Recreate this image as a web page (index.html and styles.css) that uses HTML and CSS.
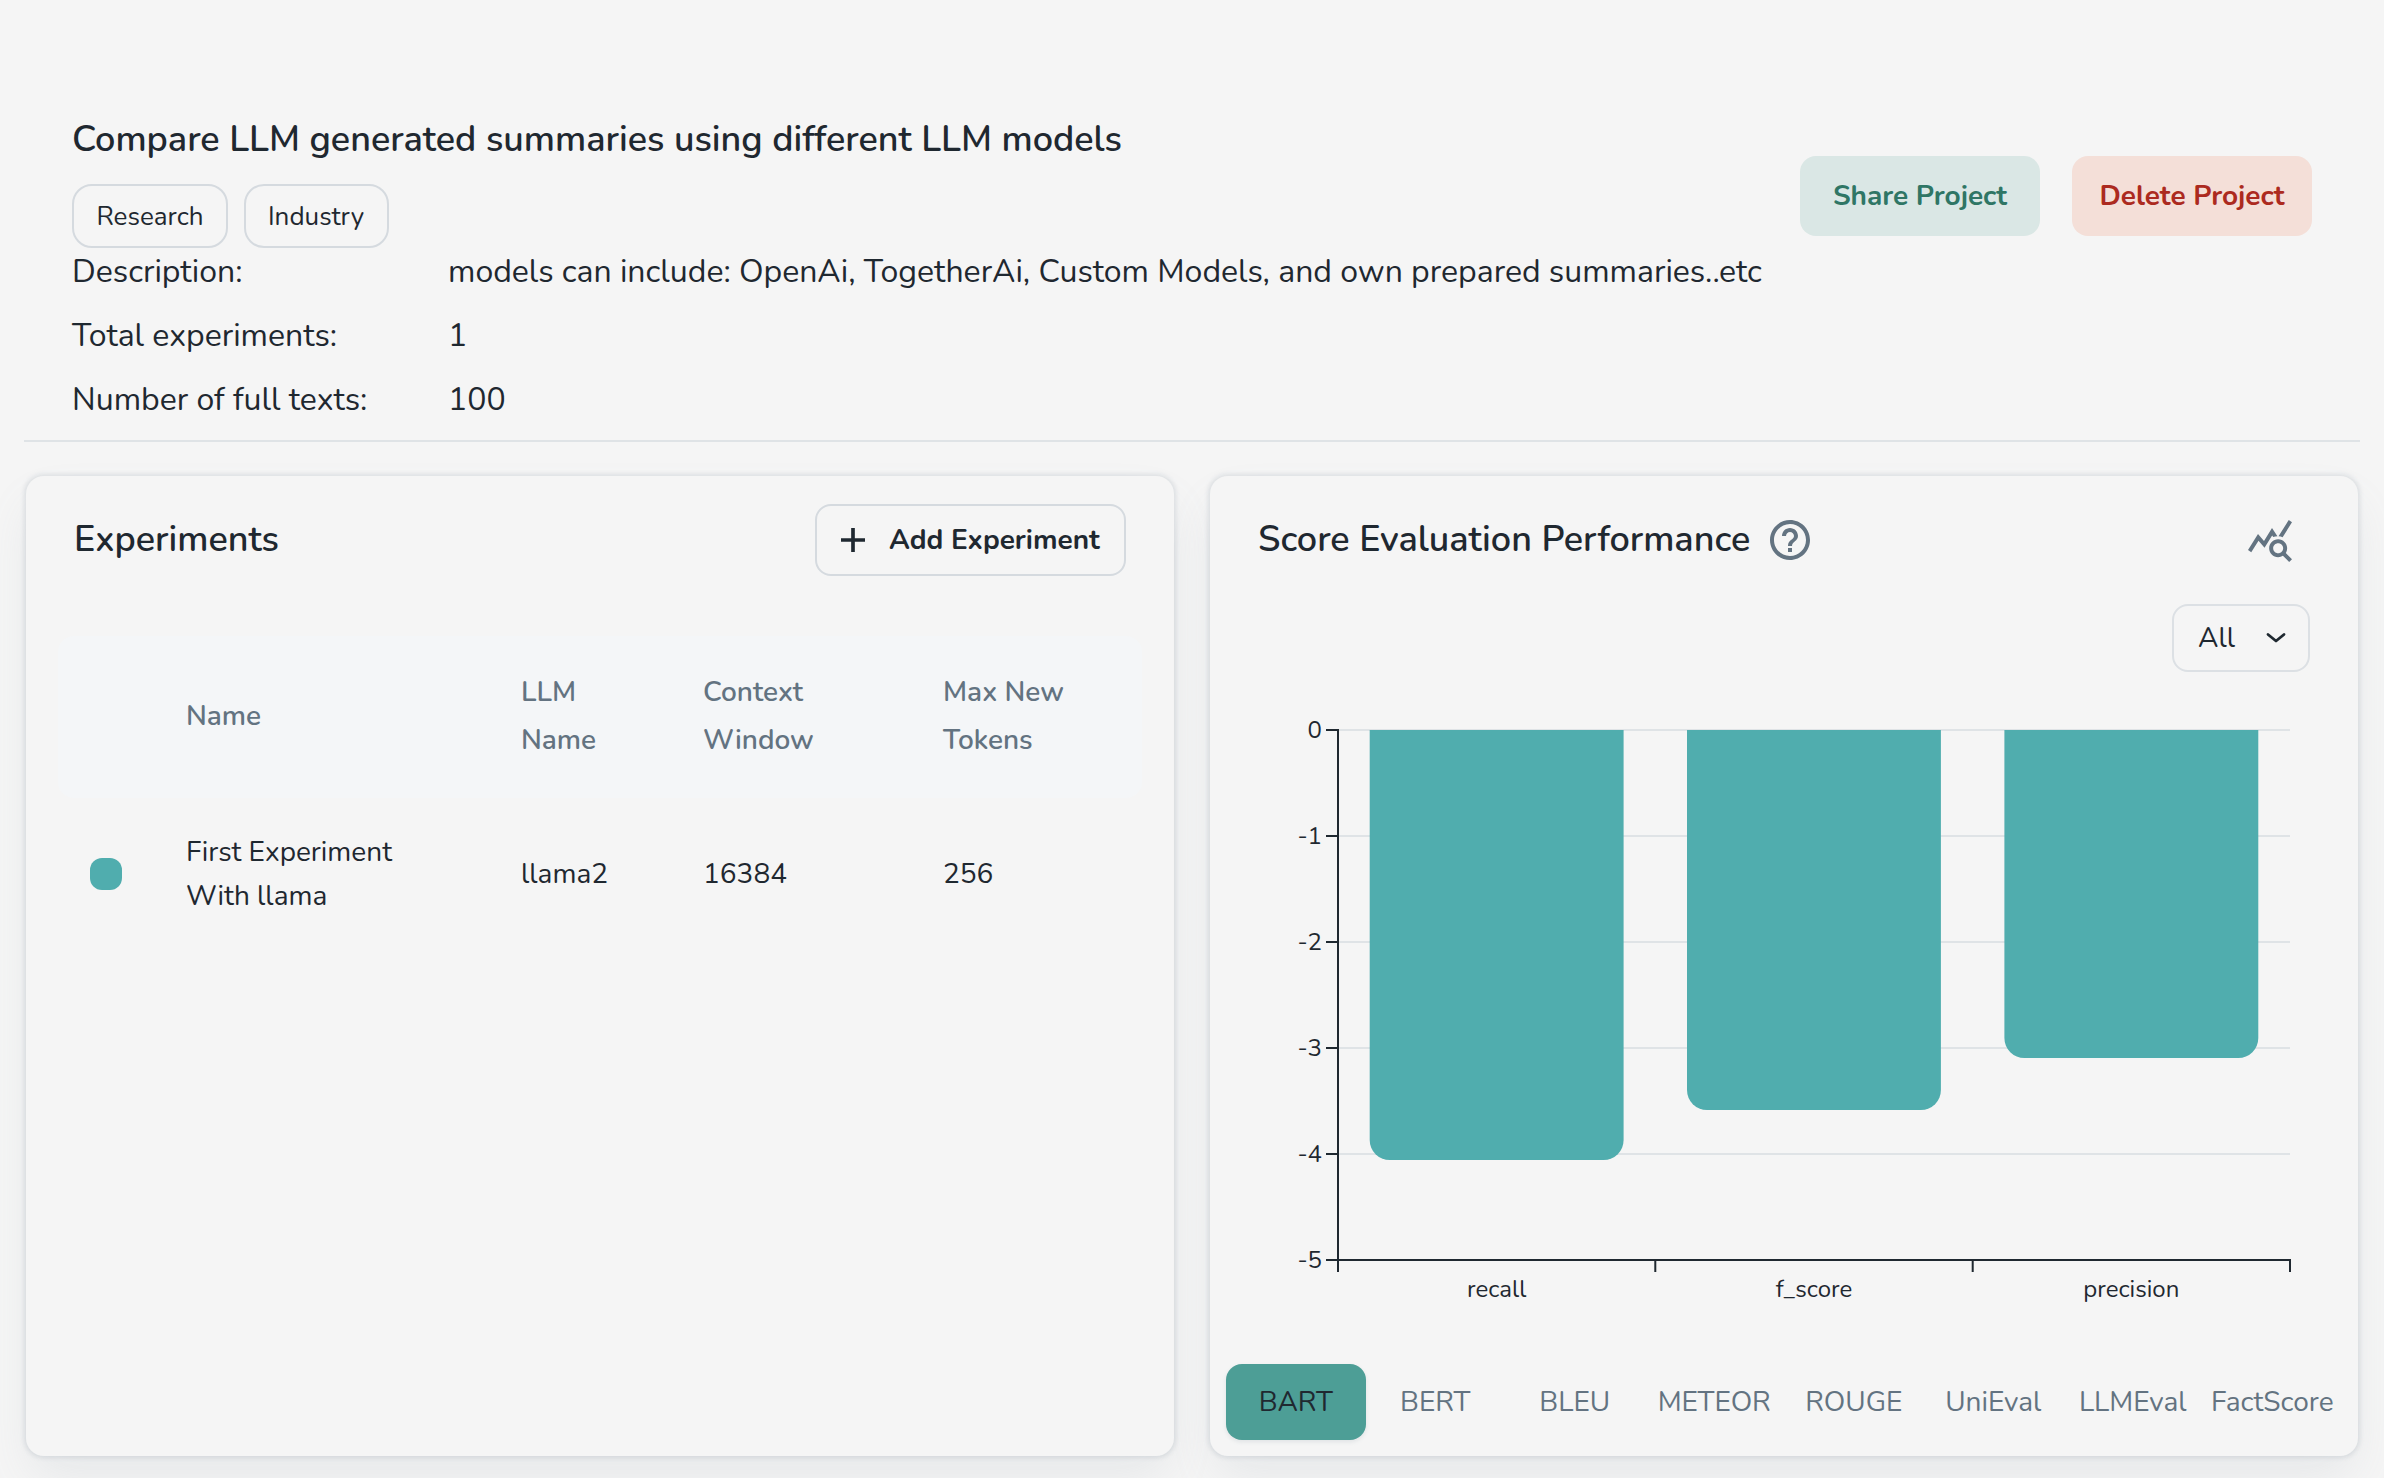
FILE: index.html
```html
<!DOCTYPE html>
<html lang="en">
<head>
<meta charset="utf-8">
<title>Compare LLM generated summaries</title>
<link rel="stylesheet" href="styles.css">
</head>
<body>
<header class="project">
  <div class="project-info">
    <h1>Compare LLM generated summaries using different LLM models</h1>
    <div class="tags"><span class="tag">Research</span><span class="tag industry">Industry</span></div>
    <dl class="facts">
      <dt>Description:</dt><dd>models can include: OpenAi, TogetherAi, Custom Models, and own prepared summaries..etc</dd>
      <dt>Total experiments:</dt><dd>1</dd>
      <dt>Number of full texts:</dt><dd>100</dd>
    </dl>
  </div>
  <div class="project-actions">
    <button class="btn share">Share Project</button>
    <button class="btn delete">Delete Project</button>
  </div>
</header>
<main class="panels">
  <section class="card">
    <div class="card-head">
      <h2>Experiments</h2>
      <button class="btn add">
        <svg width="40" height="40" viewBox="0 0 24 24"><path fill="currentColor" d="M19.200 13.100h-6.100v6.100h-2.200v-6.100H4.800v-2.200h6.100V4.800h2.200v6.100h6.100z"/></svg>
        <span>Add Experiment</span>
      </button>
    </div>
    <div class="table">
      <div class="row row-head">
        <span></span><span>Name</span><span>LLM<br>Name</span><span>Context<br>Window</span><span>Max New<br>Tokens</span>
      </div>
      <div class="row row-body">
        <i class="swatch"></i><span>First Experiment<br>With llama</span><span>llama2</span><span>16384</span><span>256</span>
      </div>
    </div>
  </section>
  <section class="card">
    <div class="card-head chart-head">
      <h2 class="with-help">Score Evaluation Performance</h2>
      <svg class="icon" width="48" height="48" viewBox="0 0 24 24"><path d="M11 18h2v-2h-2zm1-16C6.480 2 2 6.480 2 12s4.480 10 10 10 10-4.480 10-10S17.520 2 12 2m0 18c-4.410 0-8-3.590-8-8s3.590-8 8-8 8 3.590 8 8-3.590 8-8 8m0-14c-2.210 0-4 1.790-4 4h2c0-1.100.9-2 2-2s2 .9 2 2c0 2-3 1.750-3 5h2c0-2.250 3-2.500 3-5 0-2.210-1.790-4-4-4"/></svg>
      <svg class="icon query" width="48" height="48" viewBox="0 0 24 24"><path d="M19.880 18.470c.44-.7.7-1.510.7-2.390 0-2.490-2.010-4.500-4.500-4.500s-4.500 2.010-4.500 4.500 2.010 4.500 4.490 4.500c.88 0 1.700-.26 2.390-.7L21.580 23 23 21.580zm-3.800.11c-1.380 0-2.500-1.120-2.500-2.500s1.120-2.500 2.500-2.500 2.500 1.120 2.500 2.500-1.120 2.500-2.500 2.500m-.36-8.500c-.74.020-1.450.18-2.100.45l-.55-.83-3.800 6.180-3.010-3.520-3.630 5.810L1 17l5-8 3 3.500L13 6zm2.590.5c-.64-.28-1.330-.45-2.050-.49L21.380 2 23 3.180z"/></svg>
    </div>
    <div class="filter">
      <button class="select"><span>All</span>
        <svg width="32" height="32" viewBox="0 0 32 32" fill="none" stroke="currentColor" stroke-width="2.8" stroke-linecap="round" stroke-linejoin="round"><path d="M8 12.500l8 6.500 8-6.500"/></svg>
      </button>
    </div>
    <svg class="chart" width="1148" height="668" viewBox="0 0 1148 668">
      <path class="grid" d="M128 58H1080M128 164H1080M128 270H1080M128 376H1080M128 482H1080"/>
      <g class="bars">
        <path d="M159.700 58h253.900v410a20 20 0 0 1-20 20h-213.900a20 20 0 0 1-20-20z"/>
        <path d="M477 58h253.900v360a20 20 0 0 1-20 20h-213.900a20 20 0 0 1-20-20z"/>
        <path d="M794.400 58h253.900v308a20 20 0 0 1-20 20h-213.900a20 20 0 0 1-20-20z"/>
      </g>
      <path class="axis" d="M128 57V600M128 588H1081M445.300 588V600M762.700 588V600M1080 588V600M116 58H128M116 164H128M116 270H128M116 376H128M116 482H128M116 588H128"/>
      <g class="ylabels">
        <text x="112" y="66">0</text><text x="112" y="172">-1</text><text x="112" y="278">-2</text><text x="112" y="384">-3</text><text x="112" y="490">-4</text><text x="112" y="596">-5</text>
      </g>
      <g class="xlabels">
        <text x="286.700" y="625">recall</text><text x="604" y="625">f_score</text><text x="921.300" y="625">precision</text>
      </g>
    </svg>
    <nav class="tabs">
      <a class="tab active">BART</a><a class="tab">BERT</a><a class="tab">BLEU</a><a class="tab">METEOR</a><a class="tab">ROUGE</a><a class="tab">UniEval</a><a class="tab">LLMEval</a><a class="tab">FactScore</a>
    </nav>
  </section>
</main>
</body>
</html>
```
FILE: styles.css
```css
* { box-sizing: border-box; }

body {
  margin: 0;
  height: 1478px;
  overflow: hidden;
  background: #f5f5f5;
  color: #1f2830;
  font-family: Nunito, Lato, "Open Sans", sans-serif;
  font-size: 28px;
}

h1, h2 { margin: 0; font-size: 36px; font-weight: 600; line-height: 54px; }
svg { display: block; flex: none; }

.project {
  display: flex;
  justify-content: space-between;
  align-items: flex-start;
  height: 442px;
  margin: 0 24px;
  padding: 113px 48px 0;
  border-bottom: 2px solid #dfe3e6;
}
.project-info { width: 1720px; }
.tags { display: flex; gap: 16px; margin-top: 17px; }
.tag {
  width: 156px;
  height: 64px;
  border: 2px solid #d5dadf;
  border-radius: 20px;
  font-size: 26px;
  line-height: 62px;
  text-align: center;
}
.tag.industry { width: 145px; padding-right: 1px; }

.facts {
  display: grid;
  grid-template-columns: 376px auto;
  row-gap: 16px;
  margin: 0;
  font-size: 32px;
  line-height: 48px;
  white-space: nowrap;
}
.facts dd { margin: 0; }

.project-actions { display: flex; gap: 32px; margin-top: 43px; }
.btn, .select {
  font: inherit;
  color: inherit;
  background: none;
  border: 0;
  border-radius: 16px;
  padding: 0;
}
.btn { font-weight: 700; white-space: nowrap; }
.share, .delete { width: 240px; height: 80px; }
.share { background: #dae7e5; color: #2f7665; }
.delete { background: #f4dfd8; color: #ac2a20; }

.panels {
  display: grid;
  grid-template-columns: 1fr 1fr;
  gap: 36px;
  padding: 34px 26px 0;
}
.card {
  height: 980px;
  padding-top: 28px;
  border-radius: 18px;
  background: #f5f5f5;
  box-shadow: 0 0 4px 1.5px rgba(145, 158, 171, 0.24), 0 24px 48px -8px rgba(145, 158, 171, 0.16);
}
.card-head {
  display: flex;
  align-items: center;
  justify-content: space-between;
  height: 72px;
  padding: 0 48px;
}
.card-head h2 { padding-bottom: 1px; }
.add {
  display: flex;
  align-items: center;
  gap: 16px;
  width: 311px;
  height: 72px;
  padding-left: 16px;
  border: 2px solid #d5dadf;
}

.table { margin: 60px 32px 0; }
.row {
  display: grid;
  grid-template-columns: 96px 335px 182px 240px auto;
  align-items: center;
  padding-left: 32px;
}
.row-head {
  height: 162px;
  padding-bottom: 2px;
  border-radius: 16px;
  background: #f4f6f8;
  color: #637381;
  font-weight: 600;
  line-height: 48px;
}
.row-body { height: 152px; line-height: 44px; }
.swatch { width: 32px; height: 32px; border-radius: 12px; background: #50adae; }

.icon { fill: #637381; }
.chart-head { justify-content: flex-start; padding-right: 64px; }
.with-help { width: 508px; white-space: nowrap; }
.query { margin-left: auto; }
.filter { display: flex; justify-content: flex-end; padding: 28px 48px 0; }
.select {
  display: flex;
  align-items: center;
  justify-content: space-between;
  width: 138px;
  height: 68px;
  padding: 0 16px 0 24px;
  border: 2px solid #dce0e4;
}

.grid { stroke: #dfe3e6; stroke-width: 2; }
.axis { fill: none; stroke: #1f2830; stroke-width: 2; }
.bars { fill: #50adae; }
.chart text { font-size: 24px; fill: #1f2830; }
.ylabels { text-anchor: end; }
.xlabels { text-anchor: middle; }

.tabs {
  display: grid;
  grid-template-columns: repeat(8, 1fr);
  height: 76px;
  margin: 24px 16px 0;
}
.tab {
  display: flex;
  align-items: center;
  justify-content: center;
  border-radius: 16px;
  color: #637381;
}
.active {
  background: #4d9e96;
  color: #1f2830;
  box-shadow: 0 2px 4px rgba(145, 158, 171, 0.2);
}
```
